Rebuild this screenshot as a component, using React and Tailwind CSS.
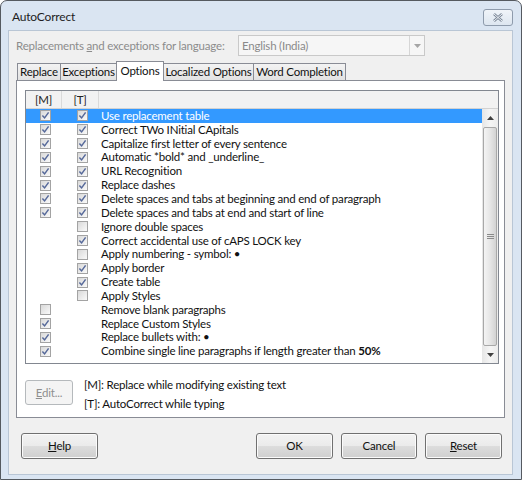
import React from "react";

const rows = [
  { t: "Use replacement table", m: 1, tt: 1, sel: true },
  { t: "Correct TWo INitial CApitals", m: 1, tt: 1 },
  { t: "Capitalize first letter of every sentence", m: 1, tt: 1 },
  { t: "Automatic *bold* and _underline_", m: 1, tt: 1 },
  { t: "URL Recognition", m: 1, tt: 1 },
  { t: "Replace dashes", m: 1, tt: 1 },
  { t: "Delete spaces and tabs at beginning and end of paragraph", m: 1, tt: 1 },
  { t: "Delete spaces and tabs at end and start of line", m: 1, tt: 1 },
  { t: "Ignore double spaces", m: -1, tt: 0 },
  { t: "Correct accidental use of cAPS LOCK key", m: -1, tt: 1 },
  { t: "Apply numbering - symbol: \u2022", m: -1, tt: 0 },
  { t: "Apply border", m: -1, tt: 1 },
  { t: "Create table", m: -1, tt: 1 },
  { t: "Apply Styles", m: -1, tt: 0 },
  { t: "Remove blank paragraphs", m: 0, tt: -1 },
  { t: "Replace Custom Styles", m: 1, tt: -1 },
  { t: "Replace bullets with: \u2022", m: 1, tt: -1 },
  { t: "Combine single line paragraphs if length greater than ", m: 1, tt: -1, bold: "50%" },
];

function Check({ checked }) {
  return (
    <span className="w-[11px] h-[11px] border border-[#a3a3a3] bg-linear-to-br from-[#d9d9d9] to-[#fafafa] flex items-center justify-center">
      {checked ? (
        <svg width="9" height="9" viewBox="0 0 9 9">
          <path d="M1.4 4.4 L3.6 6.9 L7.6 1.4" stroke="#56699a" strokeWidth="1.5" fill="none" />
        </svg>
      ) : null}
    </span>
  );
}

function Btn({ children, w }) {
  return (
    <div
      className={
        "h-[26px] rounded-[3px] border border-[#707070] bg-[linear-gradient(#f2f2f2,#ebebeb_50%,#dddddd_50%,#cfcfcf)] shadow-[inset_0_0_0_1px_#fbfbfb] flex items-center justify-center text-[#111] " +
        w
      }
    >
      {children}
    </div>
  );
}

export default function App() {
  return (
    <div className="w-[522px] h-[480px] bg-white font-['Lato','Noto_Sans',sans-serif] text-[11.5px] tracking-[-0.2px] whitespace-nowrap">
      <div className="w-[522px] h-[480px] flex flex-col border border-[#555a60] rounded-t-[7px] bg-[#dae5f2]">
        {/* title bar */}
        <div className="h-[29px] flex items-start justify-between">
          <span className="ml-[11px] mt-[8px] leading-[16px] text-[#1e1e1e] text-[12px]">AutoCorrect</span>
          <div className="mr-[8px] mt-[8px] w-[30px] h-[17px] rounded-[3px] border border-[#8e9bac] bg-linear-to-b from-[#f0f4f9] to-[#dde6f0] flex items-center justify-center">
            <svg width="12" height="9" viewBox="0 0 12 9">
              <path d="M2 1 L10 8 M10 1 L2 8" stroke="#7c8898" strokeWidth="2.6" fill="none" />
              <path d="M2 1 L10 8 M10 1 L2 8" stroke="#eef2f7" strokeWidth="1" fill="none" />
            </svg>
          </div>
        </div>

        {/* client area */}
        <div className="ml-[7px] mr-[8px] h-[445px] bg-[#f0f0f0] border border-[#b9c6d5] flex flex-col">
          {/* language row */}
          <div className="mt-[4px] h-[21px] flex items-center">
            <span className="ml-[7px] w-[222px] text-[#8c8c8c]">
              Replacements <span className="underline">a</span>nd exceptions for language:
            </span>
            <div className="w-[187px] h-[21px] border border-[#c9c9c9] bg-[#f6f6f6] flex items-center">
              <span className="flex-1 pl-[3px] text-[#8a8a8a]">English (India)</span>
              <div className="w-[15px] h-full border-l border-[#d6d6d6] flex items-center justify-center">
                <svg width="7" height="4" viewBox="0 0 7 4">
                  <path d="M0 0 L7 0 L3.5 4 Z" fill="#a5a5a5" />
                </svg>
              </div>
            </div>
          </div>

          {/* tabs */}
          <div className="mt-[5px] ml-[8px] h-[19px] flex items-end">
            {[
              ["Replace", "w-[44px]"],
              ["Exceptions", "w-[57px]"],
              ["Options", "w-[48px]", true],
              ["Localized Options", "w-[91px]"],
              ["Word Completion", "w-[93px]"],
            ].map(([label, w, sel], i) => (
              <div
                key={label}
                className={
                  (i > 0 ? "-ml-[1px] " : "") +
                  (sel
                    ? "relative z-10 h-[20px] -mb-[1px] bg-white border-x border-t border-[#898c95] flex items-center justify-center pb-[2px] text-[#111] "
                    : "h-[17px] bg-linear-to-b from-[#f3f3f3] to-[#e2e2e2] border-x border-t border-[#898c95] flex items-center justify-center text-[#111] ") +
                  w
                }
              >
                {label}
              </div>
            ))}
          </div>

          {/* tab panel */}
          <div className="ml-[7px] w-[489px] h-[338px] border border-[#898c95] bg-white flex flex-col">
            {/* list box */}
            <div className="ml-[8px] mt-[9px] w-[474px] h-[274px] border border-[#828790] flex flex-col">
              <div className="h-[18px] flex bg-[#f2f2f2] border-b border-[#d2d2d2] text-[#222]">
                <div className="w-[36px] border-r border-[#dadada] flex items-center justify-center">[M]</div>
                <div className="w-[37px] border-r border-[#dadada] flex items-center justify-center">[T]</div>
                <div className="flex-1" />
              </div>
              <div className="flex-1 flex">
                <div className="flex-1 flex flex-col">
                  {rows.map((r, i) => (
                    <div
                      key={i}
                      className={
                        "h-[13.85px] flex items-center " +
                        (r.sel ? "bg-[#3399ff] text-white" : "text-[#111]")
                      }
                    >
                      <div className="w-[36px] pl-[3px] flex justify-center">
                        {r.m >= 0 ? <Check checked={r.m === 1} /> : null}
                      </div>
                      <div className="w-[37px] pl-[4px] flex justify-center">
                        {r.tt >= 0 ? <Check checked={r.tt === 1} /> : null}
                      </div>
                      <span className="pl-[2px] leading-[14px]">
                        {r.t}
                        {r.bold ? <b>{r.bold}</b> : null}
                      </span>
                    </div>
                  ))}
                </div>
                {/* scrollbar */}
                <div className="w-[16px] bg-linear-to-r from-[#e6e6e6] via-[#f5f5f5] to-[#ececec] flex flex-col items-center">
                  <div className="h-[17px] w-full flex items-center justify-center">
                    <svg width="7" height="4" viewBox="0 0 7 4">
                      <path d="M0 4 L7 4 L3.5 0 Z" fill="#404040" />
                    </svg>
                  </div>
                  <div className="mt-[1px] w-[14px] h-[219px] rounded-[2px] border border-[#a8a8a8] bg-linear-to-r from-[#f4f4f4] via-[#e6e6e6] to-[#d3d3d3] flex items-center justify-center">
                    <svg width="7" height="6" viewBox="0 0 7 6">
                      <path d="M0 0.5 H7 M0 2.5 H7 M0 4.5 H7" stroke="#8a8a8a" strokeWidth="1" />
                    </svg>
                  </div>
                  <div className="flex-1 w-full flex items-center justify-center">
                    <svg width="7" height="4" viewBox="0 0 7 4">
                      <path d="M0 0 L7 0 L3.5 4 Z" fill="#404040" />
                    </svg>
                  </div>
                </div>
              </div>
            </div>

            {/* edit + legend */}
            <div className="mt-[11px] flex items-start">
              <div className="ml-[8px] mt-[5px] w-[48px] h-[25px] rounded-[3px] border border-[#b5b9bc] bg-[#f4f4f4] flex items-center justify-center text-[#8f8f8f]">
                <span>
                  <span className="underline">E</span>dit...
                </span>
              </div>
              <div className="ml-[11px] flex flex-col leading-[19px] text-[#111]">
                <span>[M]: Replace while modifying existing text</span>
                <span>[T]: AutoCorrect while typing</span>
              </div>
            </div>
          </div>

          {/* bottom buttons */}
          <div className="mt-[15px] flex items-center">
            <div className="ml-[12px]">
              <Btn w="w-[77px]">
                <span>
                  <span className="underline">H</span>elp
                </span>
              </Btn>
            </div>
            <div className="ml-auto mr-[10px] flex gap-[8px]">
              <Btn w="w-[77px]">OK</Btn>
              <Btn w="w-[76px]">Cancel</Btn>
              <Btn w="w-[77px]">
                <span>
                  <span className="underline">R</span>eset
                </span>
              </Btn>
            </div>
          </div>
        </div>
      </div>
    </div>
  );
}
